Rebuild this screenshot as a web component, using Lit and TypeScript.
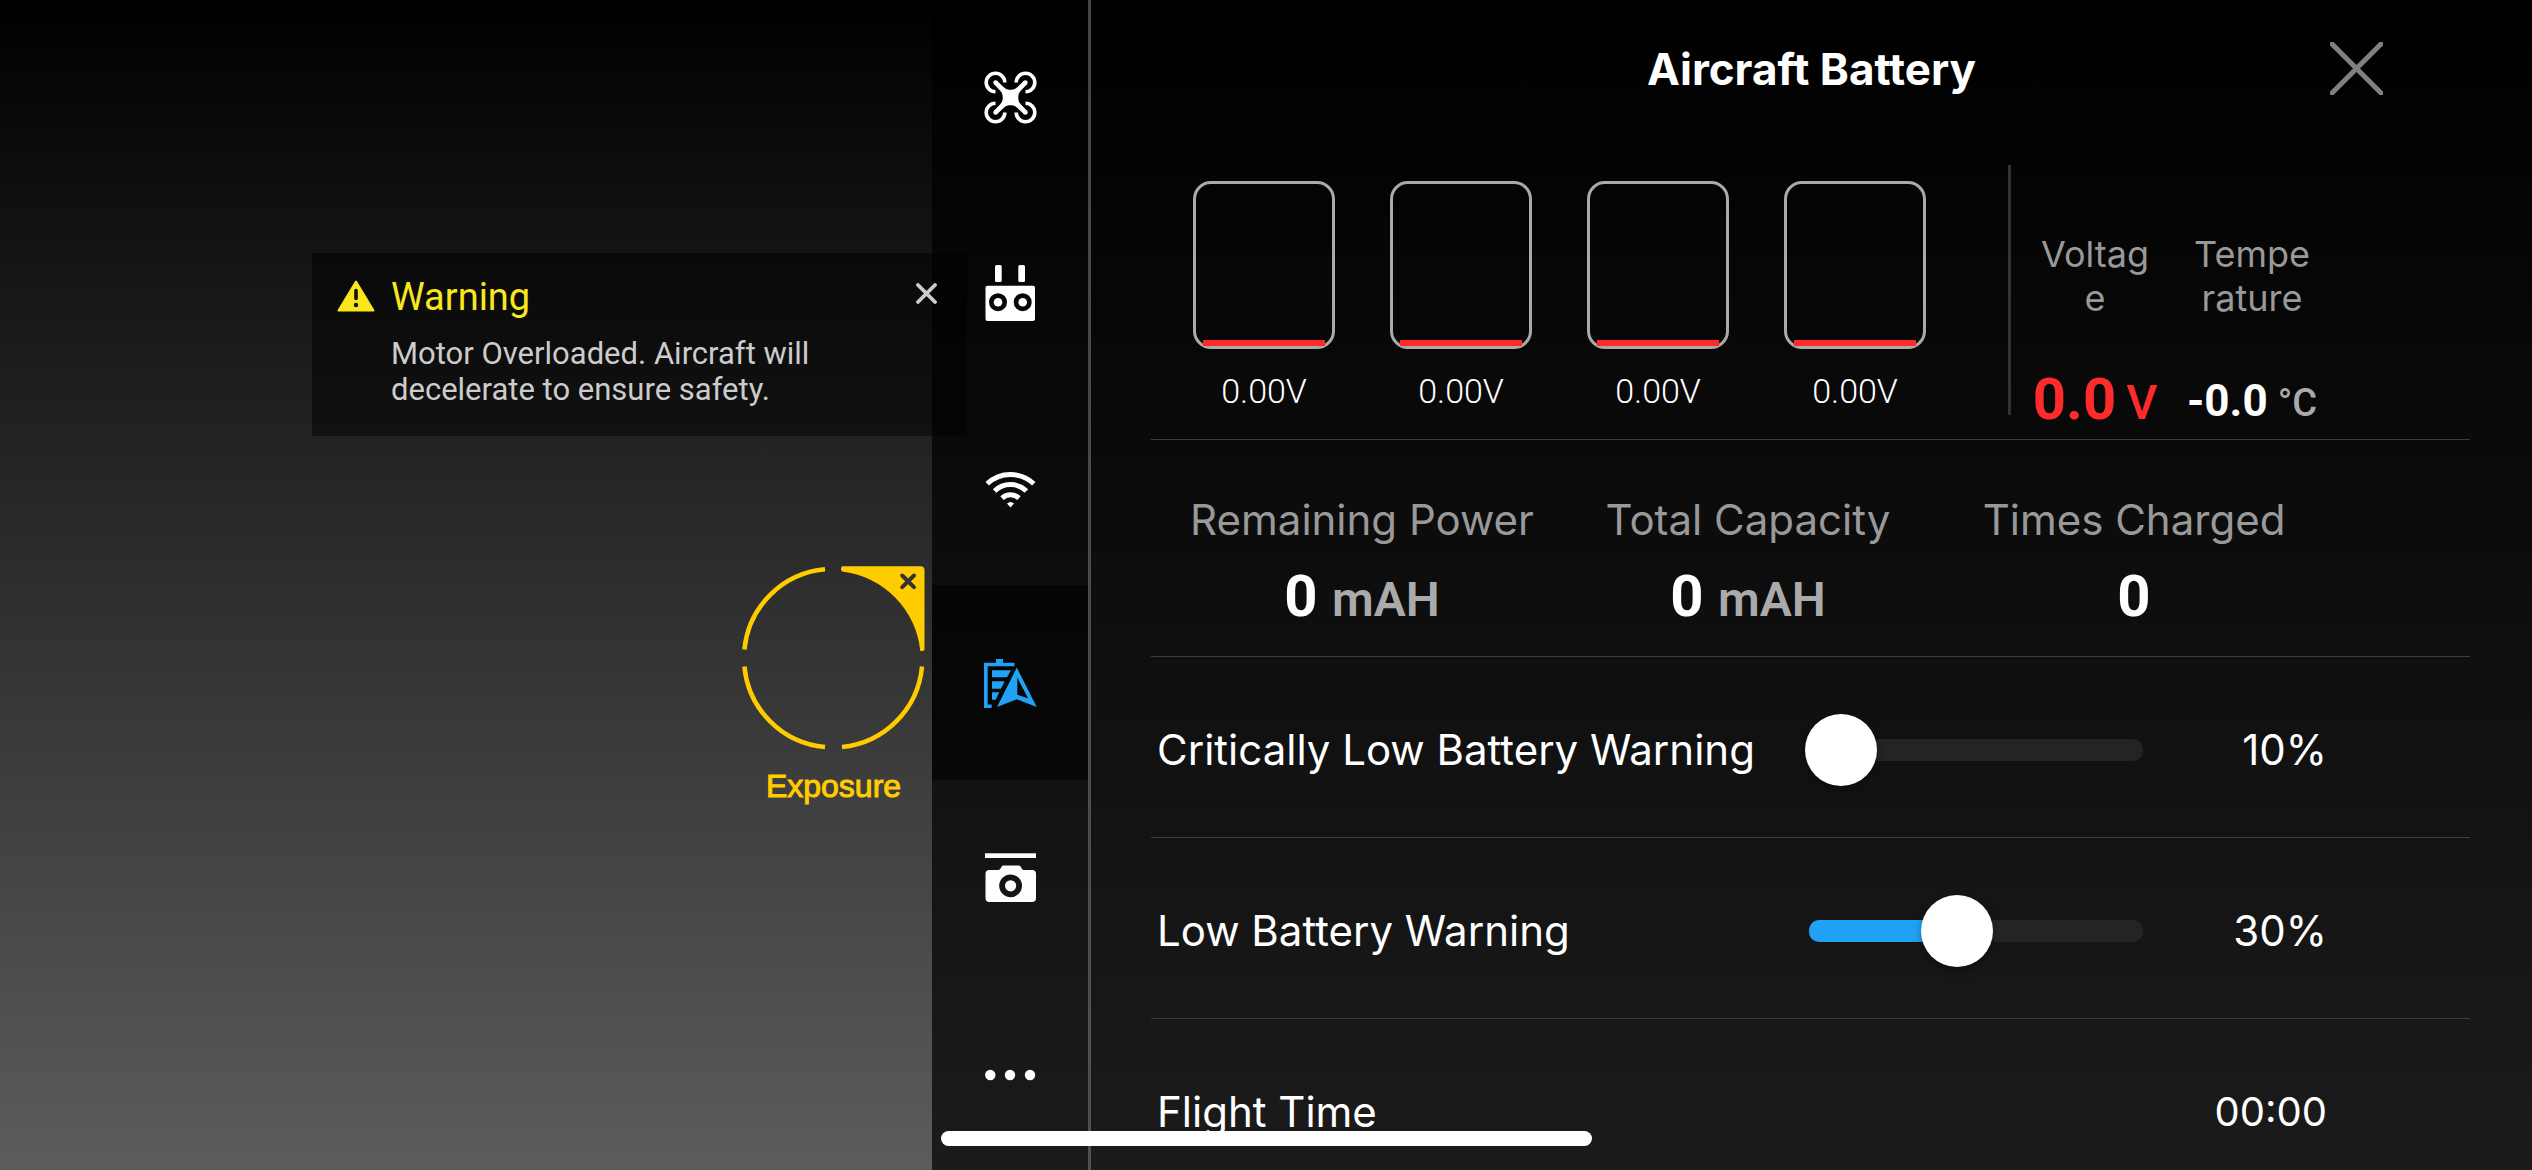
import { LitElement, html, css, svg } from "lit";
import { customElement, property, state } from "lit/decorators.js";

type TabId = "aircraft" | "remote" | "signal" | "battery" | "camera" | "more";

const ICONS = {
  aircraft: svg`<svg width="53" height="53" viewBox="0 0 53 53" aria-hidden="true">
    <g fill="none" stroke="#fff" stroke-width="3.6">
      <path d="M20.800 11.500A9.300 9.300 0 1 0 11.500 20.800" />
      <path d="M32.200 11.500A9.300 9.300 0 1 1 41.500 20.800" />
      <path d="M20.800 41.500A9.300 9.300 0 1 1 11.500 32.200" />
      <path d="M32.200 41.500A9.300 9.300 0 1 0 41.500 32.200" />
    </g>
    <path fill="#fff" d="M13.300 10L19.500 16Q22 18.700 25 18.700H28Q31 18.700 33.500 16L39.700 10L43 13.300L37 19.500Q34.300 22 34.300 25V28Q34.300 31 37 33.500L43 39.700L39.700 43L33.500 37Q31 34.300 28 34.300H25Q22 34.300 19.500 37L13.300 43L10 39.700L16 33.500Q18.700 31 18.700 28V25Q18.700 22 16 19.500L10 13.300Z" />
    <g fill="#fff"><circle cx="11.600" cy="11.600" r="2.300" /><circle cx="41.400" cy="11.600" r="2.300" /><circle cx="11.600" cy="41.400" r="2.300" /><circle cx="41.400" cy="41.400" r="2.300" /></g>
  </svg>`,
  remote: svg`<svg width="50" height="56" viewBox="0 0 50 56" aria-hidden="true">
    <g fill="#fff">
      <rect x="10" y="0" width="6.700" height="17" rx="1.500" />
      <rect x="33.300" y="0" width="6.700" height="17" rx="1.500" />
      <path fill-rule="evenodd" d="M2.500 20.700H48a2 2 0 0 1 2 2V54a2 2 0 0 1-2 2H2.500a2 2 0 0 1-2-2V22.700a2 2 0 0 1 2-2ZM13 28.200a9 9 0 1 0 0 18a9 9 0 1 0 0-18ZM37.700 28.200a9 9 0 1 0 0 18a9 9 0 1 0 0-18Z" />
      <circle cx="13" cy="37.200" r="4.300" />
      <circle cx="37.700" cy="37.200" r="4.300" />
    </g>
  </svg>`,
  signal: svg`<svg width="51" height="40" viewBox="0 -3 51 40" aria-hidden="true">
    <g fill="none" stroke="#fff" stroke-width="5">
      <path d="M2.200 12.800A34 34 0 0 1 48.800 12.800" />
      <path d="M9.600 20A23 23 0 0 1 41.400 20" />
      <path d="M17 27.200A12.500 12.500 0 0 1 34 27.200" />
    </g>
    <path fill="#fff" d="M22 32.500Q25.500 29.500 29 32.500L25.500 36.500Z" />
  </svg>`,
  battery: svg`<svg width="53" height="51" viewBox="0 -2 53 51" aria-hidden="true">
    <g fill="#20a3f7">
      <path d="M0 3.700H12V0H19V3.700H30.500V7.200H3.700V45.500H7.700V49H0Z" />
      <path d="M8 11.300H27L23 18.300H8ZM8 22.300H20.700L17 29.700H8ZM8 33.300H15.300L11.700 40.700H8Z" />
      <path fill-rule="evenodd" d="M32.800 8.500L52.700 48L32.800 40.200L13 48ZM33.300 18.500V35.700L44 39.300Z" />
    </g>
  </svg>`,
  camera: svg`<svg width="51" height="50" viewBox="0 0 51 50" aria-hidden="true">
    <g fill="#fff">
      <rect x="0" y="0.300" width="51" height="4.700" />
      <path fill-rule="evenodd" d="M4 17H13Q14.500 17 15.500 15.500L16.500 13.700Q17.200 12.500 18.500 12.500H33.500Q35 12.500 35.700 13.700L36.700 15.500Q37.500 17 39 17H47a4 4 0 0 1 4 4V45a4 4 0 0 1-4 4H4.500a4 4 0 0 1-4-4V21a4 4 0 0 1 4-4ZM25.600 21.400a11.400 11.400 0 1 0 0 22.800a11.400 11.400 0 1 0 0-22.800Z" />
      <circle cx="25.600" cy="32.800" r="5.600" />
    </g>
  </svg>`,
  more: svg`<svg width="51" height="16" viewBox="0 0 51 16" aria-hidden="true">
    <g fill="#fff"><circle cx="5.300" cy="10" r="5.200" /><circle cx="25" cy="10" r="5.200" /><circle cx="45" cy="10" r="5.200" /></g>
  </svg>`,
};

const TABS: { id: TabId; label: string }[] = [
  { id: "aircraft", label: "Aircraft" },
  { id: "remote", label: "Remote controller" },
  { id: "signal", label: "Signal" },
  { id: "battery", label: "Battery" },
  { id: "camera", label: "Gimbal camera" },
  { id: "more", label: "More" },
];

@customElement("side-tabs")
export class SideTabs extends LitElement {
  @property() active: TabId = "battery";

  static styles = css`
    :host {
      display: block;
    }
    .tabs {
      height: 100%;
      display: grid;
      grid-template-rows: repeat(6, 1fr);
    }
    .tab {
      display: grid;
      place-items: center;
      padding: 0;
      border: 0;
      background: none;
      cursor: pointer;
    }
    .tab.on {
      background: rgba(0, 0, 0, 0.6);
    }
    svg {
      display: block;
    }
  `;

  render() {
    return html`<nav class="tabs">
      ${TABS.map(
        (t) => html`<button class="tab ${t.id === this.active ? "on" : ""}" aria-label=${t.label}
          @click=${() => (this.active = t.id)}>${ICONS[t.id]}</button>`
      )}
    </nav>`;
  }
}

@customElement("level-row")
export class LevelRow extends LitElement {
  @property() label = "";
  @property({ type: Number }) min = 0;
  @property({ type: Number }) max = 100;
  @property({ type: Number }) value = 0;

  static styles = css`
    :host {
      display: block;
    }
    .row {
      display: grid;
      grid-template-columns: 1fr 342px 180px;
      align-items: center;
      height: 180px;
      padding-top: 6px;
      box-sizing: border-box;
      font-size: 42px;
      line-height: 52px;
    }
    .slider {
      display: grid;
      align-items: center;
    }
    .track,
    .range {
      grid-area: 1 / 1;
    }
    .track {
      height: 22px;
      margin: 0 4px;
      border-radius: 10px;
      background: #242424;
      overflow: hidden;
    }
    .fill {
      height: 100%;
      background: #20a3f7;
    }
    .range {
      appearance: none;
      width: 100%;
      height: 72px;
      margin: 0;
      background: none;
    }
    .range::-webkit-slider-runnable-track {
      height: 72px;
    }
    .range::-webkit-slider-thumb {
      appearance: none;
      width: 72px;
      height: 72px;
      border-radius: 50%;
      background: #fff;
      box-shadow: 0 3px 8px rgba(0, 0, 0, 0.35);
    }
    .value {
      text-align: right;
    }
  `;

  render() {
    const share = ((this.value - this.min) / (this.max - this.min)) * 100;
    return html`<div class="row">
      <label for="level">${this.label}</label>
      <div class="slider">
        <div class="track"><div class="fill" style="width:${share}%"></div></div>
        <input id="level" class="range" type="range" min=${this.min} max=${this.max} .value=${String(this.value)}
          @input=${(e: Event) => (this.value = Number((e.target as HTMLInputElement).value))} />
      </div>
      <output class="value" for="level">${this.value}%</output>
    </div>`;
  }
}

@customElement("battery-panel")
export class BatteryPanel extends LitElement {
  private cells = ["0.00V", "0.00V", "0.00V", "0.00V"];

  static styles = css`
    :host {
      display: block;
      overflow: hidden;
      color: #fff;
      font-family: Inter, "Liberation Sans", sans-serif;
    }
    .head {
      position: relative;
      display: grid;
      place-items: center;
      height: 138px;
    }
    h1 {
      margin: 0;
      font-size: 44px;
      line-height: 52px;
      font-weight: 700;
    }
    .close {
      position: absolute;
      right: 149px;
      top: 42px;
      padding: 0;
      border: 0;
      background: none;
      cursor: pointer;
    }
    svg {
      display: block;
    }
    .body {
      padding: 27px 62px 0 60px;
    }
    .section {
      border-bottom: 1px solid #3d3d3d;
    }
    .cells {
      display: flex;
      height: 274px;
      padding-left: 42px;
    }
    .cell {
      width: 142px;
      margin-right: 55px;
      padding-top: 16px;
      text-align: center;
      font: 300 34px/40px Roboto, sans-serif;
    }
    .tank {
      height: 168px;
      margin-bottom: 22px;
      border: 3px solid #aaa;
      border-radius: 18px;
      box-sizing: border-box;
      display: grid;
      align-items: end;
      padding: 0 7px;
    }
    .charge {
      height: 6px;
      background: #ff2b2b;
    }
    .divider {
      width: 3px;
      height: 250px;
      margin: 0 22px 0 27px;
      background: #333;
    }
    .readings {
      display: flex;
      gap: 33px;
      height: 266px;
      text-align: center;
    }
    .reading {
      width: 124px;
      display: flex;
      flex-direction: column;
      justify-content: space-between;
      padding-top: 67px;
      box-sizing: border-box;
    }
    .name {
      color: #999;
      font-size: 36px;
      line-height: 44px;
      overflow-wrap: anywhere;
    }
    .amount {
      color: #fff;
      font-family: Roboto, sans-serif;
      font-weight: 700;
      font-size: 58px;
      line-height: 56px;
      white-space: nowrap;
    }
    .unit {
      color: #aaa;
      font-weight: 600;
      font-size: 48px;
    }
    .reading .amount {
      display: flex;
      justify-content: center;
      align-items: baseline;
      gap: 10px;
    }
    .reading .unit {
      font-weight: 500;
    }
    .reading .small {
      font-size: 44px;
    }
    .reading .small .unit {
      font-size: 38px;
    }
    .low,
    .low .unit {
      color: #ff2b2b;
    }
    .stats {
      display: grid;
      grid-template-columns: repeat(3, 1fr);
      height: 217px;
      padding: 54px 143px 0 18px;
      box-sizing: border-box;
      text-align: center;
    }
    .stats .name {
      font-size: 42px;
      line-height: 52px;
      margin-bottom: 22px;
    }
    .rows {
      padding: 0 143px 0 6px;
    }
    .time {
      display: flex;
      justify-content: space-between;
      align-items: center;
      height: 180px;
      padding-top: 6px;
      box-sizing: border-box;
      font-size: 42px;
      line-height: 52px;
    }
    .clock {
      font-size: 40px;
    }
  `;

  render() {
    return html`
      <header class="head">
        <h1>Aircraft Battery</h1>
        <button class="close" aria-label="Close">
          <svg width="53" height="53" viewBox="0 0 53 53">
            <path d="M2 2L51 51M51 2L2 51" stroke="#808080" stroke-width="5" stroke-linecap="round" />
          </svg>
        </button>
      </header>
      <div class="body">
        <section class="section cells">
          ${this.cells.map((v) => html`<div class="cell"><div class="tank"><div class="charge"></div></div>${v}</div>`)}
          <div class="divider"></div>
          <div class="readings">
            <div class="reading">
              <div class="name">Voltage</div>
              <div class="amount low">0.0 <span class="unit">V</span></div>
            </div>
            <div class="reading">
              <div class="name">Temperature</div>
              <div class="amount small">-0.0 <span class="unit">°C</span></div>
            </div>
          </div>
        </section>
        <section class="section stats">
          <div><div class="name">Remaining Power</div><div class="amount">0 <span class="unit">mAH</span></div></div>
          <div><div class="name">Total Capacity</div><div class="amount">0 <span class="unit">mAH</span></div></div>
          <div><div class="name">Times Charged</div><div class="amount">0</div></div>
        </section>
        <section class="section rows">
          <level-row label="Critically Low Battery Warning" min="10" max="45" value="10"></level-row>
        </section>
        <section class="section rows">
          <level-row label="Low Battery Warning" min="15" max="50" value="30"></level-row>
        </section>
        <section class="rows time"><span>Flight Time</span><span class="clock">00:00</span></section>
      </div>
    `;
  }
}

@customElement("app-root")
export class AppRoot extends LitElement {
  @state() private warningOpen = true;

  static styles = css`
    :host {
      display: block;
    }
    .screen {
      position: relative;
      display: grid;
      grid-template-columns: 932fr 156px 3px 1441fr;
      height: 100vh;
      overflow: hidden;
      background: linear-gradient(#000, #5c5c5c);
      font-family: Roboto, sans-serif;
    }
    .view {
      position: relative;
    }
    side-tabs,
    battery-panel {
      background: rgba(0, 0, 0, 0.7);
      min-height: 0;
    }
    .line {
      background: linear-gradient(#444, #505050);
    }
    .warning {
      position: absolute;
      left: 312px;
      top: 253px;
      width: 655px;
      box-sizing: border-box;
      display: grid;
      grid-template-columns: 38px 1fr 21px;
      column-gap: 16px;
      padding: 22px 30px 28px 25px;
      background: rgba(0, 0, 0, 0.5);
    }
    .warning h2 {
      margin: 0;
      color: #f8e71c;
      font-size: 38px;
      line-height: 44px;
      font-weight: 400;
    }
    .warning p {
      grid-column: 2 / 4;
      margin: 17px 0 0;
      padding-right: 80px;
      color: #ccc;
      font-size: 31px;
      line-height: 36px;
    }
    .sign {
      margin-top: 5px;
    }
    button {
      align-self: start;
      margin-top: 8px;
      padding: 0;
      border: 0;
      background: none;
      cursor: pointer;
    }
    svg {
      display: block;
    }
    .exposure {
      position: absolute;
      right: 7px;
      top: 566px;
      display: grid;
      justify-items: center;
      gap: 18px;
      color: #ffcc00;
      font: 32px/36px "Liberation Sans", Arial, sans-serif;
      -webkit-text-stroke: 1px #ffcc00;
    }
    .home {
      position: absolute;
      left: 50%;
      bottom: 24px;
      width: 651px;
      height: 15px;
      margin-left: -325px;
      border-radius: 8px;
      background: #fff;
    }
  `;

  private renderWarning() {
    return html`<section class="warning" role="alert">
      <svg class="sign" width="38" height="32" viewBox="0 0 38 32" aria-hidden="true">
        <path fill="#f8e71c" stroke="#f8e71c" stroke-width="2" stroke-linejoin="round" d="M19 1.500L36.500 30.500H1.500Z" />
        <path d="M19 10.500V18.500" stroke="#111" stroke-width="3.600" stroke-linecap="round" />
        <circle cx="19" cy="25" r="2.200" fill="#111" />
      </svg>
      <h2>Warning</h2>
      <button aria-label="Dismiss warning" @click=${() => (this.warningOpen = false)}>
        <svg width="21" height="21" viewBox="0 0 21 21">
          <path d="M2 2L19 19M19 2L2 19" stroke="#ccc" stroke-width="3.800" stroke-linecap="round" />
        </svg>
      </button>
      <p>Motor Overloaded. Aircraft will decelerate to ensure safety.</p>
    </section>`;
  }

  render() {
    return html`<main class="screen">
      <div class="view">
        <div class="exposure">
          <svg width="183" height="184" viewBox="0 0 183 184" aria-hidden="true">
            <g fill="none" stroke="#ffcc00" stroke-width="4.500">
              <path d="M2.400 83.500A89 89 0 0 1 83 3.300" />
              <path d="M2.400 100.500A89 89 0 0 0 83 181" />
              <path d="M180 100.500A89 89 0 0 1 100 181" />
            </g>
            <path fill="#ffcc00" d="M100 0.300H178.500Q182.500 0.300 182.500 4.300V83Q182.500 85 180.500 85H178.300A89 89 0 0 0 100 5.500Q98 3 100 0.300Z" />
            <path d="M160.200 9.500L172 21.200M172 9.500L160.200 21.200" stroke="#333" stroke-width="4" stroke-linecap="round" />
          </svg>
          <span>Exposure</span>
        </div>
      </div>
      <side-tabs></side-tabs>
      <div class="line"></div>
      <battery-panel></battery-panel>
      ${this.warningOpen ? this.renderWarning() : ""}
      <div class="home"></div>
    </main>`;
  }
}
